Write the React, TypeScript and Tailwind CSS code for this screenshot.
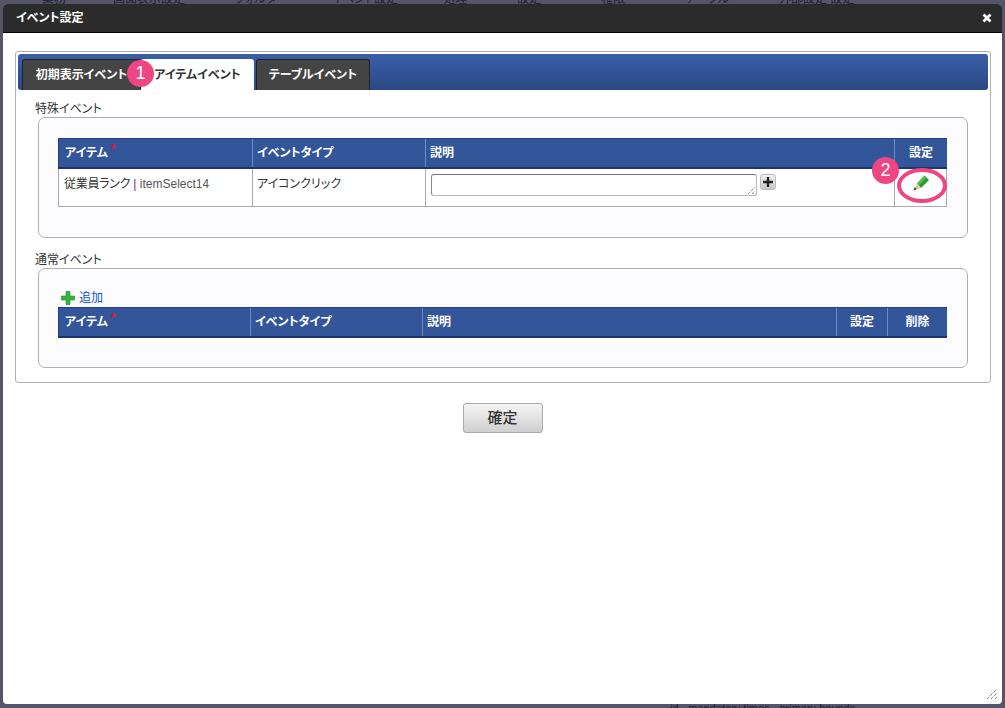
const font = "[font-family:'Liberation_Sans','Noto_Sans_CJK_JP',sans-serif] [font-feature-settings:'palt']";

function Th({ w, children, center, star }: { w: string; children: React.ReactNode; center?: boolean; star?: boolean }) {
  return (
    <div className={`${w} flex items-center border-l border-[#6f8cc4] first:border-l-[#24407c] px-[4px] first:pl-[6px] text-[12px] font-bold text-white ${center ? "justify-center" : ""}`}>
      <span>{children}</span>
      {star && <span className="text-[#e8103c] text-[12px] -mt-2 ml-[3px] leading-none">*</span>}
    </div>
  );
}

function Pencil() {
  return (
    <svg width="18" height="18" viewBox="0 0 18 18">
      <path d="M5 9.5 L12.5 1.5 L17 6 L9 14 Z" fill="#2c9a34" />
      <path d="M5 9.5 L12.5 1.5 L14.5 3.5 L7 11.5 Z" fill="#4fbf4c" />
      <path d="M5 9.5 L9 14 L1.5 16.5 Z" fill="#e0c8a0" />
      <path d="M2.8 13 L4.6 15.3 L1.5 16.5 Z" fill="#3a3a3a" />
    </svg>
  );
}

function Badge({ n, className }: { n: string; className: string }) {
  return (
    <div className={`absolute w-[27px] h-[27px] rounded-full bg-[#ee4583] text-white text-[18px] leading-[27px] text-center ${className}`}>
      {n}
    </div>
  );
}

function Tab({ w, active, children }: { w: string; active?: boolean; children: React.ReactNode }) {
  return (
    <div
      className={`${w} h-[31px] rounded-t-[3px] flex items-center justify-center text-[12px] font-bold ${
        active ? "bg-white text-[#333]" : "bg-[#444444] text-white border border-[#222] border-b-0"
      }`}
    >
      {children}
    </div>
  );
}

export default function App() {
  return (
    <div className={`relative w-[1005px] h-[708px] overflow-hidden bg-[#555468] ${font}`}>
      <div className="absolute left-0 -top-[7px] h-[12px] w-full text-[12px] leading-[12px] text-[#20203a] whitespace-nowrap flex">
        <span className="ml-[42px]">業務</span>
        <span className="ml-[47px]">画面表示設定</span>
        <span className="ml-[50px]">フォルダ</span>
        <span className="ml-[55px]">イベント設定</span>
        <span className="ml-[45px]">処理</span>
        <span className="ml-[50px]">設定</span>
        <span className="ml-[60px]">権限</span>
        <span className="ml-[60px]">テーブル</span>
        <span className="ml-[50px]">外部設定 設定</span>
      </div>
      <div className="absolute left-[670px] top-[702px] text-[11px] leading-[12px] text-[#20203a] whitespace-nowrap">
        id - mandatory times - primary bounds
      </div>
      <div className="relative mt-[4px] mx-[3px] h-[700px] rounded-[4px] bg-white flex flex-col overflow-hidden">
        <div className="h-[29px] shrink-0 bg-[#2b2b2b] border-b border-black flex items-center justify-between pl-[13px] pr-[10px] text-[12px] font-bold text-white">
          <span>イベント設定</span>
          <svg width="10" height="10" viewBox="0 0 10 10">
            <path d="M1.5 1.5 L8.5 8.5 M8.5 1.5 L1.5 8.5" stroke="#fff" strokeWidth="2.8" />
          </svg>
        </div>

        <div className="mt-[18px] ml-[12px] w-[976px] h-[332px] border border-[#b0b0b0] rounded-[3px] p-[2px] shrink-0">
          <div className="h-[36px] rounded-[3px] bg-gradient-to-b from-[#3a5fa8] to-[#2b4985] flex items-end pl-[4px]">
            <Tab w="w-[119px]">初期表示イベント</Tab>
            <Tab w="w-[113px]" active>アイテムイベント</Tab>
            <div className="w-[2px]" />
            <Tab w="w-[114px]">テーブルイベント</Tab>
          </div>

          <div className="ml-[17px] mt-[11px] text-[12px] leading-[16px] text-[#333]">特殊イベント</div>
          <div className="ml-[20px] w-[930px] h-[121px] rounded-[7px] border border-[#b0b0b0] bg-[#fcfcff] pt-[20px] pl-[19px]">
            <div className="w-[889px]">
              <div className="h-[31px] bg-[#335599] border-t border-[#24407c] border-b-2 border-b-[#1f3468] flex">
                <Th w="w-[194px]" star>アイテム</Th>
                <Th w="w-[173px]">イベントタイプ</Th>
                <Th w="w-[469px]">説明</Th>
                <Th w="w-[53px]" center>設定</Th>
              </div>
              <div className="h-[38px] flex border-b border-[#aaaaaa] bg-white text-[12px] text-[#333]">
                <div className="w-[194px] border-l border-[#aaaaaa] pl-[5px] pt-[7px] leading-[16px]">
                  <span className="tracking-[-0.3px]">従業員ランク</span> <span className="text-[#7a2a7a]">|</span> <span className="text-[#555]">itemSelect14</span>
                </div>
                <div className="w-[173px] border-l border-[#aaaaaa] pl-[4px] pt-[7px] leading-[16px]">アイコンクリック</div>
                <div className="w-[469px] border-l border-[#aaaaaa] pl-[5px] pt-[5px] flex items-start gap-[3px]">
                  <div className="relative w-[326px] h-[22px] rounded-[3px] border border-[#b8b8b8] border-t-[#777] border-l-[#888] bg-white">
                    <svg className="absolute right-0 bottom-0" width="9" height="9" viewBox="0 0 9 9">
                      <path d="M1 8 L8 1 M5 8 L8 5" stroke="#555" strokeWidth="1" strokeDasharray="1 1" />
                    </svg>
                  </div>
                  <div className="w-[16px] h-[16px] rounded-[3px] border border-[#bbb] bg-gradient-to-b from-[#f0f0f0] to-[#c8c8c8] flex items-center justify-center">
                    <svg width="10" height="10" viewBox="0 0 10 10">
                      <path d="M5 0 V10 M0 5 H10" stroke="#222" strokeWidth="2.4" />
                    </svg>
                  </div>
                </div>
                <div className="w-[53px] border-x border-[#aaaaaa] flex items-center justify-center pb-[10px]">
                  <Pencil />
                </div>
              </div>
            </div>
          </div>

          <div className="ml-[17px] mt-[14px] text-[12px] leading-[16px] text-[#333]">通常イベント</div>
          <div className="ml-[20px] w-[930px] h-[100px] rounded-[7px] border border-[#b0b0b0] bg-[#fcfcff] pt-[20px] pl-[19px]">
            <div className="h-[18px] flex items-center pl-[3px] gap-[4px] text-[12px] text-[#0b55c4]">
              <svg width="14" height="14" viewBox="0 0 14 14">
                <path d="M5 0.5 H9 V5 H13.5 V9 H9 V13.5 H5 V9 H0.5 V5 H5 Z" fill="#37b23f" stroke="#1d8a2a" strokeWidth="0.6" />
              </svg>
              <span>追加</span>
            </div>
            <div className="w-[889px] h-[31px] bg-[#335599] border-t border-[#24407c] border-b-2 border-b-[#1f3468] flex">
              <Th w="w-[192px]" star>アイテム</Th>
              <Th w="w-[172px]">イベントタイプ</Th>
              <Th w="w-[414px]">説明</Th>
              <Th w="w-[51px]" center>設定</Th>
              <Th w="w-[60px]" center>削除</Th>
            </div>
          </div>
        </div>

        <div className="mt-[20px] flex justify-center shrink-0">
          <div className="w-[80px] h-[30px] rounded-[3px] border border-[#aaaaaa] bg-gradient-to-b from-[#f5f5f5] to-[#cfcfcf] flex items-center justify-center text-[15px] font-medium text-[#333]">
            確定
          </div>
        </div>

        <svg className="absolute right-[4px] bottom-[4px]" width="12" height="12" viewBox="0 0 12 12">
          <path d="M1 11 L11 1 M5 11 L11 5 M9 11 L11 9" stroke="#444" strokeWidth="1" strokeDasharray="1 1" />
        </svg>
      </div>

      <Badge n="1" className="left-[127px] top-[60px]" />
      <Badge n="2" className="left-[872px] top-[157px]" />
      <div className="absolute left-[897px] top-[168px] w-[50px] h-[35px] rounded-[50%] border-[4px] border-[#ee4583]" />
    </div>
  );
}
